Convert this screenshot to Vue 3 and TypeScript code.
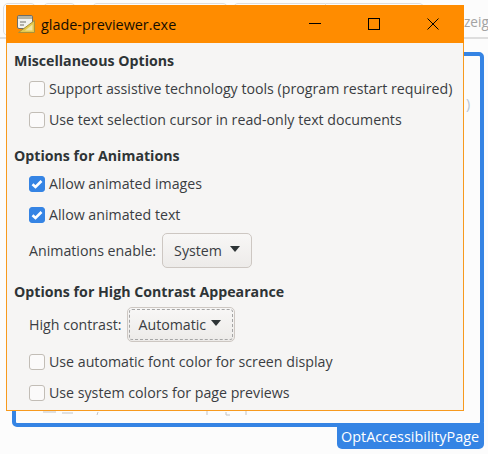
<script setup lang="ts">
type Option = {
  label: string
  checked: boolean
}

const miscOptions: Option[] = [
  { label: 'Support assistive technology tools (program restart required)', checked: false },
  { label: 'Use text selection cursor in read-only text documents', checked: false },
]

const animationOptions: Option[] = [
  { label: 'Allow animated images', checked: true },
  { label: 'Allow animated text', checked: true },
]

const contrastOptions: Option[] = [
  { label: 'Use automatic font color for screen display', checked: false },
  { label: 'Use system colors for page previews', checked: false },
]
</script>

<template>
  <div class="desk">
    <div class="toolbar">
      <span class="tool tool--a"></span>
      <span class="tool tool--b"></span>
      <span class="tool tool--c"></span>
      <span class="tool tool--d"></span>
      <span class="tool tool--e"></span>
      <span class="tool-text">zeig</span>
    </div>

    <div class="frame">
      <span class="frame-paren">)</span>
      <span class="frame-label">OptAccessibilityPage</span>
      <svg class="frame-peek" width="220" height="6" viewBox="0 0 220 6">
        <path d="M0 1h13M19 2h11M55 1l-1 3M164 0v4M183 1v3h4M203 0v4" fill="none" stroke="#c4c4c4" />
      </svg>
    </div>

    <section class="window">
      <header class="titlebar">
        <svg class="app-icon" width="18" height="18" viewBox="0 0 18 18">
          <rect x="0.5" y="0.5" width="15" height="13" rx="1.5" fill="#f2f2ee" stroke="#6f6e66" />
          <rect x="1" y="1" width="14" height="3" fill="#b5b3a3" />
          <path d="M3 7h6M3 10h4" stroke="#6f6e66" />
          <path d="M1.5 17.5h16V5.5z" fill="#e3c94f" stroke="#a8913a" />
          <path d="M8 15.5h7.5v-6z" fill="#f3e7a4" />
        </svg>
        <span class="title">glade-previewer.exe</span>
        <div class="controls">
          <svg width="12" height="12" viewBox="0 0 12 12"><path d="M0 5.5h12" stroke="#000" /></svg>
          <svg width="12" height="12" viewBox="0 0 12 12"><rect x="0.5" y="0.5" width="11" height="11" fill="none" stroke="#000" /></svg>
          <svg width="12" height="12" viewBox="0 0 12 12"><path d="M0.5 0.5l11 11M11.5 0.5l-11 11" stroke="#000" /></svg>
        </div>
      </header>

      <div class="content">
        <h2 class="heading">Miscellaneous Options</h2>
        <label v-for="opt in miscOptions" :key="opt.label" class="check">
          <span class="box"></span>{{ opt.label }}
        </label>

        <h2 class="heading heading--next">Options for Animations</h2>
        <label v-for="opt in animationOptions" :key="opt.label" class="check">
          <span class="box box--on">
            <svg width="16" height="16" viewBox="0 0 16 16"><path d="M3.5 8.2l3 2.8 6-6" fill="none" stroke="#fff" stroke-width="2.6" /></svg>
          </span>{{ opt.label }}
        </label>
        <div class="combo-row">
          <span>Animations enable:</span>
          <button class="combo">System<i class="arrow arrow--wide"></i></button>
        </div>

        <h2 class="heading heading--contrast">Options for High Contrast Appearance</h2>
        <div class="combo-row combo-row--tight">
          <span>High contrast:</span>
          <button class="combo combo--focus">Automatic<i class="arrow"></i></button>
        </div>
        <label v-for="opt in contrastOptions" :key="opt.label" class="check">
          <span class="box"></span>{{ opt.label }}
        </label>
      </div>
    </section>
  </div>
</template>

<style scoped>
.desk {
  position: relative;
  width: 488px;
  height: 454px;
  overflow: hidden;
  background: #fcfcfc;
  font-family: "Open Sans", "Noto Sans", sans-serif;
  font-size: 14.2px;
  color: #3a3d42;
}

.toolbar {
  height: 39px;
  box-sizing: border-box;
  display: flex;
  padding: 3px 0 0 3px;
  border-bottom: 2px solid #dedede;
}

.tool {
  height: 33px;
  border: 1px solid #dedede;
  border-radius: 5px;
  box-sizing: border-box;
}

.tool--a { width: 33px; margin-right: 7px; }
.tool--b { width: 33px; margin-right: 16px; }
.tool--c { width: 136px; margin-right: 5px; }
.tool--d { width: 93px; border-radius: 5px 0 0 5px; }
.tool--e { width: 98px; border-left: 0; border-radius: 0 5px 5px 0; }

.tool-text {
  position: absolute;
  left: 464px;
  top: 12px;
  color: #a3a3a3;
  font-size: 13.6px;
}

.frame {
  position: absolute;
  left: 12px;
  top: 52px;
  width: 472px;
  height: 375px;
  box-sizing: border-box;
  border: 4px solid #3584e4;
  border-radius: 5px;
}

.frame-paren {
  position: absolute;
  left: 450px;
  top: 38px;
  color: #b9c4d2;
}

.frame-peek {
  position: absolute;
  left: 27px;
  top: 355px;
}

.frame-label {
  position: absolute;
  right: -4px;
  bottom: -26px;
  width: 147px;
  height: 26px;
  box-sizing: border-box;
  padding-left: 4px;
  padding-top: 4px;
  background: #3584e4;
  border-radius: 0 0 5px 5px;
  color: #fff;
  font-size: 14.4px;
  line-height: 20px;
  white-space: nowrap;
}

.window {
  position: absolute;
  left: 6px;
  top: 5px;
  width: 458px;
  height: 406px;
  box-sizing: border-box;
  background: #f6f5f4;
  border: 1px solid #f79a1e;
  border-top: 0;
}

.titlebar {
  height: 38px;
  display: flex;
  align-items: center;
  background: #ff8c00;
  color: #140c00;
  margin: 0 -1px;
  padding-left: 11px;
  font-size: 14.4px;
}

.app-icon {
  margin-right: 6px;
}

.controls {
  margin-left: auto;
  display: flex;
  gap: 47px;
  padding-right: 25px;
}

.content {
  padding: 6px 0 0 7px;
}

.heading {
  margin: 0;
  height: 24px;
  line-height: 24px;
  font-size: 14.2px;
  font-weight: 700;
  color: #2e3436;
}

.heading--next {
  margin-top: 9px;
}

.heading--contrast {
  margin-top: 12px;
}

.check {
  display: flex;
  align-items: center;
  height: 31px;
  padding-left: 15px;
  white-space: nowrap;
}

.box {
  width: 16px;
  height: 16px;
  margin-right: 4px;
  flex: none;
  box-sizing: border-box;
  border: 1px solid #c2bdb6;
  border-radius: 3px;
  background: #fbfafa;
}

.box--on {
  background: #3584e4;
  border-color: #3584e4;
  position: relative;
}

.box--on svg {
  position: absolute;
  left: -1px;
  top: -1px;
}

.combo-row {
  display: flex;
  align-items: center;
  gap: 6px;
  height: 35px;
  padding-left: 15px;
  margin-top: 3px;
}

.combo-row--tight {
  margin-bottom: 4px;
}

.combo {
  height: 35px;
  box-sizing: border-box;
  display: flex;
  align-items: center;
  gap: 8px;
  padding: 0 11px;
  font: inherit;
  color: inherit;
  background: linear-gradient(#f8f7f6, #edebe9);
  border: 1px solid #cdc7c2;
  border-radius: 5px;
}

.combo--focus {
  outline: 1px dashed #a5a5a5;
  outline-offset: -3px;
  gap: 5px;
  padding: 0 13px 0 10px;
}

.arrow {
  width: 0;
  height: 0;
  border-left: 5.5px solid transparent;
  border-right: 5.5px solid transparent;
  border-top: 6px solid #2e3436;
  margin-top: -3px;
}
</style>

<style>
body {
  margin: 0;
}
</style>
